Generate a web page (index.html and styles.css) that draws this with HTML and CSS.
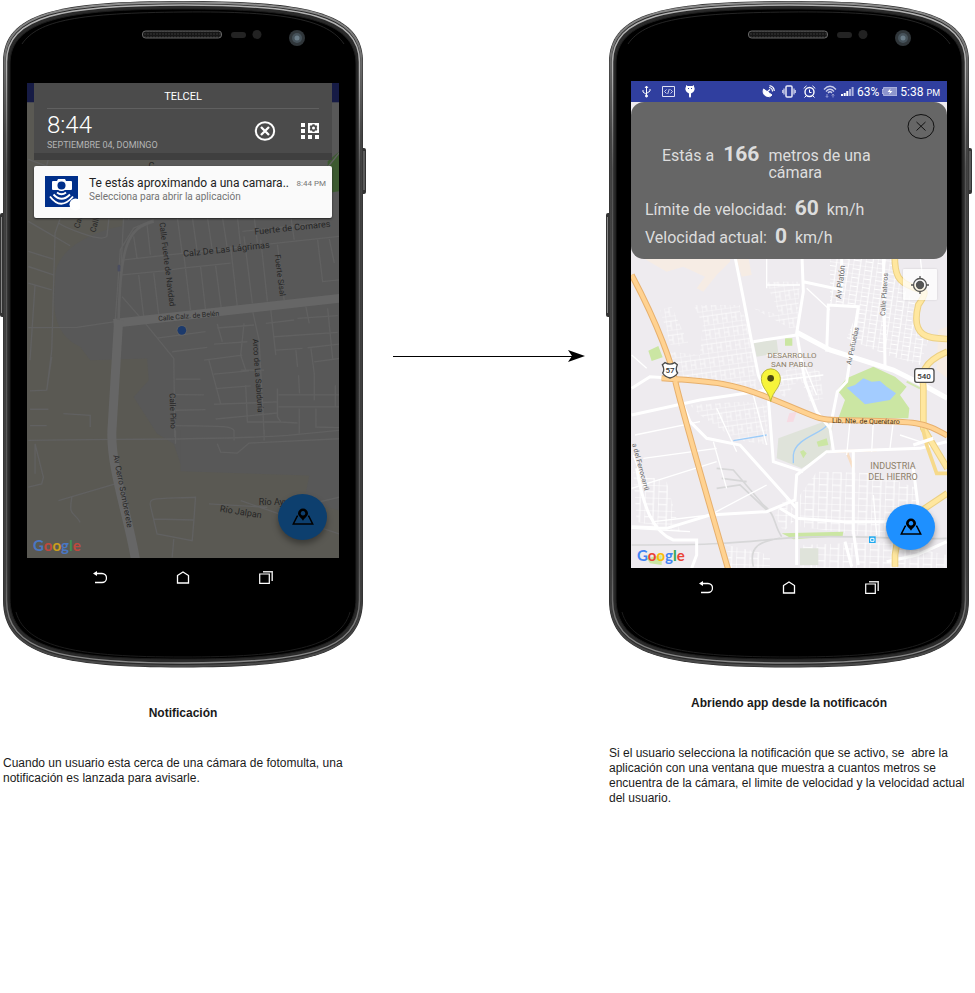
FILE: index.html
```html
<!DOCTYPE html>
<html lang="es">
<head>
<meta charset="utf-8">
<title>Notificación de cámaras</title>
<link rel="stylesheet" href="styles.css">
</head>
<body>
<svg class="defs" aria-hidden="true">
  <defs>
    <linearGradient id="rim" x1="0" y1="0" x2="0" y2="1">
      <stop offset="0" stop-color="#8e8e8e"/><stop offset=".06" stop-color="#777"/>
      <stop offset=".2" stop-color="#444"/><stop offset=".9" stop-color="#3c3c3c"/><stop offset="1" stop-color="#4a4a4a"/>
    </linearGradient>
    <linearGradient id="shine" x1="0" y1="0" x2="0" y2="1">
      <stop offset="0" stop-color="#b4b4b4"/><stop offset=".1" stop-color="#b0b0b0"/>
      <stop offset=".25" stop-color="#555"/><stop offset=".85" stop-color="#5a5a5a"/><stop offset="1" stop-color="#8a8a8a"/>
    </linearGradient>
    <pattern id="mesh" width="3" height="3" patternUnits="userSpaceOnUse"><rect width="3" height="3" fill="#161616"/><circle cx="1" cy="1" r=".8" fill="#3d3d3d"/></pattern>
  </defs>
  <symbol id="shell" viewBox="0 0 366 668" preserveAspectRatio="none">
    <rect x="0" y="213" width="6" height="104" rx="2" fill="#333"/><path d="M1.500 217V313" stroke="#888"/>
    <rect x="359" y="148" width="7" height="46" rx="2" fill="#333"/><path d="M364 151V190" stroke="#888"/>
    <path d="M3 62C3 12 60 1 183 1S363 12 363 62V600C363 655 306 667.500 183 667.500S3 655 3 600Z" fill="#2a2a2a"/>
    <path d="M4.500 62C4.500 13 61 2.500 183 2.500S361.500 13 361.500 62V600C361.500 654 306 666 183 666S4.500 654 4.500 600Z" fill="none" stroke="url(#rim)" stroke-width="2"/>
    <path d="M6.500 62C6.500 16 63 5 183 5S359.500 16 359.500 62V600C359.500 651 305 663 183 663S6.500 651 6.500 600Z" fill="none" stroke="url(#shine)" stroke-width="1.500"/>
    <path d="M10 64C10 20 66 9 183 9S356 20 356 64V598C356 648 304 659 183 659S10 648 10 598Z" fill="#000" stroke="#1c1c1c"/>
    <path d="M22 44C38 20 80 13 183 12S328 20 344 44" fill="none" stroke="#2e2e2e" stroke-width=".8"/>
    <path d="M16 612C26 648 80 657 183 657S340 648 350 612" fill="none" stroke="#1c1c1c"/>
    <rect x="142.500" y="31" width="79" height="7" rx="3" fill="url(#mesh)" stroke="#666"/>
    <rect x="231" y="32" width="15" height="6" rx="3" fill="#232323"/>
    <circle cx="257" cy="34.500" r="4.500" fill="#222"/>
    <circle cx="297" cy="38" r="8" fill="#30363a"/><circle cx="297" cy="38" r="5" fill="#46525a"/><circle cx="297" cy="38" r="2.500" fill="#6b7d89"/>
  </symbol>
  <symbol id="back" viewBox="0 0 14 13"><path d="M2 2.500H9a4.500 4.500 0 0 1 0 9H2" fill="none" stroke="#fff" stroke-width="1.300"/><path d="M0 2.500 4 0V5Z" fill="#fff"/></symbol>
  <symbol id="home" viewBox="0 0 14 13"><path d="M1.500 4.500 7 1 12.500 4.500V12H1.500Z" fill="none" stroke="#fff" stroke-width="1.300"/></symbol>
  <symbol id="recent" viewBox="0 0 14 13"><path d="M.7 3H10.300V12.300H.7Z" fill="none" stroke="#fff" stroke-width="1.200"/><path d="M4 .8H13.200V10" fill="none" stroke="#ddd" stroke-width="1.500"/></symbol>
  <symbol id="pinmap" viewBox="0 0 22 18"><path d="M6 8.200H5.200L1.300 16H20.700L16.800 8.200H16" fill="none" stroke="#000" stroke-width="1.500"/><path fill-rule="evenodd" d="M11 .5a5 5 0 0 1 5 4.800c0 3-3 4-5 7.500-2-3.500-5-4.500-5-7.500a5 5 0 0 1 5-4.800Zm0 2.500a2.300 2.300 0 1 0 .01 0Z"/></symbol>
</svg>

<main class="board">
  <figure class="step">
    <div class="phone phone-notice">
      <svg class="shell" aria-hidden="true"><use href="#shell"/></svg>
      <div class="screen screen-notice">
        <svg class="map" viewBox="27 83 311 475" preserveAspectRatio="xMidYMid slice" role="img" aria-label="Mapa de calles">
          <rect x="27" y="83" width="312" height="476" fill="#585858"/>
          <rect x="27" y="83" width="312" height="20" fill="#161b45"/>
          <g transform="translate(0 200) scale(.33333)">
            <path d="M80-290H500L480-140 370 60 365 80C300 90 160 140 165 240C160 300 150 400 240 440L270 480 440 475 445 540 400 590 470 700 520 730 540 790 1020 810V1080H80Z" fill="#5a5953"/>
            <path d="M540 812 925 825 910 900 1015 930V690H540Z" fill="#585858"/>
            <path d="M980-115 1016-145V-25L980-20Z" fill="#3c5a30"/>
            <g fill="none" stroke="#616161" stroke-width="4">
              <path d="M185-290 130-60M85-120 250-60 330 20 320 110C300 130 190 80 175 70M200 0 165 100 160 270 155 450 140 570 90 572M85 65 210 138M85 155 160 178M85 200 160 225M85 250 155 270M105 255 90 480M155 470 140 570M90 627H145M190 640 270 645 270 680M90 676H140"/>
              <path d="M85 383 230 382 345 365M85 720C350 715 640 720 860 705L1015 690M365 290 435 370 520 475 523 710M470 414 615 395M515 455 620 442M525 537H600M525 583 610 584M525 630 615 628M610 480 725 465M640 522 745 512M645 565 750 557M640 612 830 605M645 656 830 638M625 480 660 610M730 370 720 465 735 510M650 372 665 425M650 384 760 375M640 432 740 425M755 330 775 420 790 700M735 555 740 665H840M720 510 790 510"/>
              <path d="M810 330 825 465M795 370 880 360M890 355 1010 347M820 410 1010 397M825 450 905 445M920 443 1015 432M915 320 925 370M980 325 995 475M930 445 940 520M885 450 890 500M940 485 1015 475M893 525 896 580M940 520V600M830 565V650L840 665 890 668M833 584H1015M833 620H1015M895 625V700M945 625V680L1015 682M1003 555V620"/>
              <path d="M370 180 690 145 1015 110M365 225 490 213 545 205 690 190M400 110 410 175M440 75 450 165M415 225 430 350M460 220 475 345M600 200 615 330M645 198 662 325M690 140 710 320M730 110 755 310M780 120 800 305M830 135 850 300M550 165 570 330M530 50 545 160M575 50 590 155M620 50 635 150M665 50 680 145M710 50 720 140M760 50 770 130M725 95 960 70M870 50 880 120M950 120 965 245 1015 240M985 118 1000 190M370 50 355 350M460 60 400 85 360 150 345 360M375 0 385 60M540-60 550 50M610-80 620 50M670-85 680 50M740-85 750 50M820-90 835 50M1015-140 950-60"/>
              <path d="M525 730V690M700 720V690C690 675 650 678 525 676M650 730 660 755 710 758 745 728 1015 715M790 720V690M105 730 130 830 125 850 85 860M105 820V730M175 900 345 850M215 890C205 950 220 930 240 965M450 915C445 890 460 895 585 890L580 960 575 1020 470 1000Z M460 955 580 958M520 1015 515 1070M625 910 800 920M720 900 850 945 1015 1000M930 910 1015 890"/>
            </g>
            <path d="M340 370 1016 295" fill="none" stroke="#666" stroke-width="26"/><path d="M355 360 335 690C330 800 385 950 405 1075" fill="none" stroke="#666" stroke-width="27"/>
            <path d="M460 65C380 85 360 140 355 360" fill="none" stroke="#626262" stroke-width="8"/>
            <rect x="352" y="195" width="8" height="20" rx="4" fill="#4b4e61"/>
            <circle cx="544" cy="391" r="16" fill="#777" opacity=".25"/><circle cx="544" cy="391" r="13" fill="#1c3a6c"/>
          </g>
          <g class="street">
            <text class="small" transform="translate(79 229) rotate(-75)">Calle</text><text class="small" transform="translate(95 233) rotate(-75)">Calle</text>
            <text transform="translate(148 169)">C</text>
            <text class="small" transform="translate(159 223) rotate(83)">Calle Fuerte de Navidad</text>
            <text transform="translate(254 235) rotate(-6)">Fuerte de Comares</text>
            <text transform="translate(183 257) rotate(-6)">Calz De Las Lágrimas</text>
            <text class="small" transform="translate(274 255) rotate(83)">Fuerte Sisal</text>
            <text class="tiny" transform="translate(158 321) rotate(-5)">Calle Calz. de Belén</text>
            <text class="small" transform="translate(252 339) rotate(86)">Arco de La Sabiduría</text>
            <text class="small" transform="translate(169 393) rotate(88)">Calle Pino</text>
            <text class="small" transform="translate(113 455) rotate(79)">Av Cerro Sombrerete</text>
            <text transform="translate(219 511) rotate(9)">Río Jalpan</text>
            <text transform="translate(258 504)">Río Ayutla</text>
          </g>
        </svg>
        <div class="shade">
          <header class="panel">
            <p class="carrier">TELCEL</p>
            <div class="clock-row">
              <div><p class="clock">8:44</p><p class="date">SEPTIEMBRE 04, DOMINGO</p></div>
              <div class="tools">
                <button aria-label="Borrar notificaciones"><svg width="22" height="22" viewBox="0 0 22 22" fill="none" stroke="#fff" stroke-width="2"><ellipse cx="11" cy="11" rx="9.200" ry="8.700"/><path d="m7 7 8 8m0-8-8 8" stroke-width="2.300"/></svg></button>
                <button aria-label="Ajustes rápidos"><svg width="18" height="18" viewBox="0 0 18 18" fill="#fff"><path d="M0 1h4v4H0zM0 7h4v4H0zM0 13h4v4H0zM7 13h4v4H7zM14 13h4v4H14z"/><path fill-rule="evenodd" d="M7 1H18V11H7Z M11.500 2.300 11 3.500 9.500 3.300 8.700 5 9.500 6 8.700 7.300 9.500 8.800 11 8.500 11.500 9.700H13.500L14 8.500 15.500 8.800 16.300 7.300 15.500 6 16.300 5 15.500 3.300 14 3.500 13.500 2.300Z"/><circle cx="12.500" cy="6" r="1.500"/></svg></button>
              </div>
            </div>
          </header>
          <article class="notice">
            <svg class="notice-icon" width="35" height="35" viewBox="0 0 35 35" aria-hidden="true">
              <rect width="33" height="31" fill="#002f8a"/>
              <path d="M8 5H12L13 3H20L21 5H26Q27 5 27 6V13Q27 14 26 14H8Q7 14 7 13V6Q7 5 8 5Z" fill="#fff"/><circle cx="16.500" cy="9.500" r="4.800" fill="#002f8a" stroke="#fff" stroke-width="1.500"/>
              <g fill="none" stroke="#fff" stroke-width="1.900"><path d="M12 16.500Q16.500 20 21 16.500"/><path d="M8.500 18.500Q16.500 27 25 18.500"/><path d="M5 20.500Q16 35 28 20.500"/></g>
              <circle cx="30.500" cy="28.500" r="6" fill="#fff"/>
            </svg>
            <div class="notice-text"><div class="notice-head"><h2>Te estás aproximando a una camara..</h2><time>8:44 PM</time></div><p>Selecciona para abrir la aplicación</p></div>
          </article>
        </div>
        <p class="google google-dim"><span class="b">G</span><span class="r">o</span><span class="y">o</span><span class="b">g</span><span class="g">l</span><span class="r">e</span></p>
        <button class="fab fab-dim" aria-label="Ver mapa"><svg width="22" height="18"><use href="#pinmap"/></svg></button>
      </div>
      <nav class="keys"><button aria-label="Atrás"><svg><use href="#back"/></svg></button><button aria-label="Inicio"><svg><use href="#home"/></svg></button><button aria-label="Recientes"><svg><use href="#recent"/></svg></button></nav>
    </div>
    <figcaption class="caption caption-notice"><h1>Notificación</h1><p>Cuando un usuario esta cerca de una cámara de fotomulta, una notificación es lanzada para avisarle.</p></figcaption>
  </figure>

  <div class="arrow" aria-hidden="true"><span></span><svg width="17" height="12" viewBox="0 0 17 12"><path d="M0 0 17 6 0 12 4 6Z"/></svg></div>

  <figure class="step">
    <div class="phone phone-app">
      <svg class="shell" aria-hidden="true"><use href="#shell"/></svg>
      <div class="screen screen-app">
        <svg class="map" viewBox="631 81 316 487" preserveAspectRatio="xMidYMid slice" role="img" aria-label="Mapa de Querétaro">
          <defs>
            <pattern id="blocksA" width="28" height="42" patternUnits="userSpaceOnUse" patternTransform="rotate(-8)"><path d="M0 0H28M0 16H28M14 16V42M0 0V42M0 30H14" stroke="#fff" stroke-width="2" fill="none"/></pattern>
            <pattern id="blocksB" width="36" height="26" patternUnits="userSpaceOnUse" patternTransform="rotate(8)"><path d="M0 0H36M0 13H22M0 0V26M22 0V26" stroke="#fff" stroke-width="3" fill="none"/></pattern>
            <pattern id="blocksC" width="40" height="38" patternUnits="userSpaceOnUse" patternTransform="rotate(2)"><path d="M0 0H40M0 20H26M0 0V38M26 0V38" stroke="#fff" stroke-width="3" fill="none"/></pattern>
          </defs>
          <rect x="631" y="81" width="316" height="488" fill="#eeebef"/>
          <g transform="translate(600 255) scale(.33333)">
            <path d="M130-20H390V20L350 60 310 110 290 100 315 65 250 35 200 50 130 10Z M400-20H440L455 60 425 65Z M1015 225 1042 215V370L1010 345Z" fill="#f6ece4"/>
            <path d="M690-20H870L900 90 945 140 935 200 985 255 960 330 860 300 740 250 780 150 690 150Z" fill="url(#blocksB)"/>
            <path d="M310 190 430 170 450 250 465 300 470 410 340 385 230 365 210 290 300 300Z M180 165 215 155 265 265 215 280Z M280 150H420V190H300Z" fill="url(#blocksA)"/>
            <path d="M500 80H600L590 230 460 160 540 180 510 110Z M520 370 600 320 660 350 670 430 630 440 600 370 550 430Z M270 450 430 440 500 450 505 570 410 555 300 480Z" fill="url(#blocksA)"/>
            <path d="M650 650 830 655 950 700V860L780 840 600 815 600 720Z M600 870 860 860 1040 900V940H600Z M100 650 200 680 240 830 110 800Z M380 870 510 900V940H390Z M560 720 590 790 550 830 525 780Z" fill="url(#blocksC)"/>
            <path d="M460 258 530 255 535 295 470 305Z M535 550 700 490 690 590 605 640 530 610Z M600 880 655 880V930H600Z" fill="#dfe3da"/>
            <path d="M555 250H577V272H555Z M145 287 175 273 188 307 155 318Z M600 590 610 585 620 595 610 610Z M650 560 680 550 685 570 655 575Z M820 335 885 365 920 395 900 420 928 460 925 490 715 490 735 435 712 405 740 370Z M545 835 730 830 728 843 580 853Z M140 910 185 900V930L150 925Z" fill="#cbe6a3"/>
            <path d="M740 398 765 390 790 370 815 380 840 378 860 395 888 415 870 435 795 448Z" fill="#a3ccff"/>
            <path d="M590 470 580 500 560 502 568 475Z" fill="#f6dbe3"/>
            <path d="M680 512C665 535 585 550 580 600V625M400 557 500 540" fill="none" stroke="#9ccbf8" stroke-width="4" transform="translate(0 0)"/>
            <g fill="none" stroke="#d7d7d8" stroke-width="5"><path d="M95 870C350 870 400 865 550 850S900 855 1040 850M350 640 400 645 490 750C530 780 520 810 545 845M350 700 420 690 500 765M365 670 440 680M540 850C460 860 450 890 460 935"/></g>
            <path d="M700 590 830 585M740 590 760 640" fill="none" stroke="#f7ddc4" stroke-width="8"/>
            <g fill="none" stroke="#fff" stroke-width="4">
              <path d="M95 300 140 340M500 300H600L650 420M500 380 670 360M500 90H600M500 0V100M690 165 620 100M105 540 300 500M340 560 380 700M95 700 350 620M130 610 350 580M160 800 330 780 500 690M820 500 815 590M880 500 870 580M750 500 740 600M900 540 960 560M820 720 830 840M100 600 135 700M460 420 500 570M960 0 970 90M350 460 410 590M95 820 270 830"/>
            </g>
            <g fill="none" stroke="#fff" stroke-width="9">
              <path d="M400-20 430 130 455 260 475 360 505 430 520 620 610 650M605-20 610 110 590 235 615 380 650 470 690 520 700 585M610 80 725 105V-20M460 260 590 240M680 290 685 150 775 155 740 380 712 410 690 520M850-20 855 330 850 335M95 480 300 435 500 405M95 400 150 365 220 370M230 400 270 500 320 550 420 570 590 760M95 815 200 820 330 780 500 770 585 735 590 660 680 590 960 580 1040 560M590 740V930M760 590V830L775 930M540 760 590 790 730 800 880 800M940 640 955 760M110 640C130 760 160 830 220 855L290 855V900L275 940M735 860 755 935M860 920 950 900 1040 860"/>
            </g>
            <path d="M590 232 690 285 880 345 970 390 1042 430" fill="none" stroke="#fff" stroke-width="15"/>
            <path d="M920 380 960 400" stroke="#d3e8b1" stroke-width="6"/>
            <g fill="none" stroke="#ecd083" stroke-width="20"><path d="M885-20C880 70 900 80 935 95S990 100 955 150C930 250 990 250 1042 252M1042 290C950 330 970 370 970 400V520L1042 640M1042 715 900 810 885 900V935"/></g>
            <g fill="none" stroke="#ffe79f" stroke-width="14"><path d="M885-20C880 70 900 80 935 95S990 100 955 150C930 250 990 250 1042 252M1042 290C950 330 970 370 970 400V520L1042 640M1042 715 900 810 885 900V935"/></g>
            <path d="M968 520 980 570 1010 655H1042" fill="none" stroke="#f6d98a" stroke-width="11"/>
            <path d="M95 60C180 220 215 330 225 375S250 480 385 945M185 370C350 380 400 385 510 430C650 485 650 495 710 495C950 500 960 495 1042 542" fill="none" stroke="#e7b06d" stroke-width="18"/>
            <path d="M95 60C180 220 215 330 225 375S250 480 385 945M185 370C350 380 400 385 510 430C650 485 650 495 710 495C950 500 960 495 1042 542" fill="none" stroke="#ffd291" stroke-width="12"/>
            <path d="M940 570 1000 550" stroke="#fff" stroke-width="10"/>
            <path d="M187 329 195 323Q210 332 224 323L232 329Q225 345 233 354Q225 366 210 369Q195 366 188 354Q195 345 187 329Z M951 341H995Q1002 341 1002 349V374Q1002 382 995 382H951Q944 382 944 374V349Q944 341 951 341Z" fill="#fff" stroke="#4c4c4c" stroke-width="4"/>
            <path d="M512 439C505 405 484 400 484 370A28 28 0 0 1 541 370C541 400 520 405 512 439Z" fill="#f7f43a" stroke="#b9b63a" stroke-width="3"/><circle cx="512" cy="370" r="10" fill="#4d4a12"/>
            <rect x="807" y="844" width="20" height="20" fill="#20aaf0"/><path d="M812 850H822V859H812Z" fill="none" stroke="#fff" stroke-width="3"/>
          </g>
          <g class="street street-light">
            <text transform="translate(841 299) rotate(-83)">Av Platón</text>
            <text class="tiny" transform="translate(885 316) rotate(-86)">Calle Plateros</text>
            <text class="tiny" transform="translate(851 365) rotate(-78)">Av Peñuelas</text>
            <text class="tiny" transform="translate(632 444) rotate(75)">a del Ferrocarril</text>
            <text class="highway" x="832" y="423" transform="rotate(1 832 423)">Lib. Nte. de Querétaro</text>
          </g>
          <g class="district"><text x="792" y="358">DESARROLLO</text><text x="792" y="367">SAN PABLO</text></g>
          <g class="district district-big"><text x="893" y="469">INDUSTRIA</text><text x="893" y="480">DEL HIERRO</text></g>
          <g class="shield"><text x="670" y="373">57</text><text x="924" y="379">540</text></g>
        </svg>
        <div class="app">
          <div class="status">
            <svg width="9" height="13" viewBox="0 0 9 13" fill="none" stroke="#fff"><path d="M4.500 1V11M1 5V7L4.500 9.500M8 4V6L4.500 8.500M3 3 4.500 1 6 3"/><circle cx="4.500" cy="11" r="1" fill="#fff"/></svg>
            <svg class="s-code" width="13" height="13" viewBox="0 0 13 13" fill="none" stroke="#dfe1f3"><path d="M.5 1.500H12.500V11.500H.5Z"/><path d="M4.500 4.500 2.500 6.500 4.500 8.500M8.500 4.500 10.500 6.500 8.500 8.500M7.300 4 5.700 9" stroke-width=".9"/></svg>
            <svg class="s-bot" width="10" height="13" viewBox="0 0 10 13" fill="#fff"><path d="M1 0 2.500 1H7.500L9 0V1.500Q10 3 9.500 5 8.500 8 6 8.500V11.500L5 13 4 11.500V8.500Q1.500 8 .5 5 0 3 1 1.500Z"/><path d="M3 3.500h1M6 3.500h1" stroke="#303f9f"/></svg>
            <svg class="s-first" width="13" height="13" viewBox="0 0 13 13" fill="none" stroke="#fff"><path d="M1.500 4Q0 9 4 11T10 10Z" fill="#fff"/><path d="M5 7 8 4.500M7 2.500Q10.500 3 10.500 6.500M7.500.700Q12 1.500 12.300 6" stroke-width="1.200"/></svg>
            <svg width="14" height="13" viewBox="0 0 14 13" fill="none" stroke="#e8eaf8"><rect x="4" y="1" width="6" height="11" rx="1" stroke-width="1.500"/><path d="M2 3.500V9.500M12 3.500V9.500M.5 5V8M13.500 5V8" stroke="#b5bae0" stroke-width="1.500"/></svg>
            <svg width="13" height="13" viewBox="0 0 13 13" fill="none" stroke="#fff"><circle cx="6.500" cy="7" r="4.500" stroke-width="1.400"/><path d="M6.500 4.500V7.500H8.500M.7 3.500 3.500.8M12.300 3.500 9.500.8M3 11 1.500 12.500M10 11 11.500 12.500"/></svg>
            <svg width="14" height="13" viewBox="0 0 14 13" fill="none" stroke="#c8ccea"><path d="M1 4.500Q7-2 13 4.500M3 6.500Q7 2 11 6.500M5 8Q7 5.500 9 8" stroke-width="1.300"/><path d="M4 9V12M2.800 11 4 12.500 5.200 11M10 12.500V9.500M8.800 10.500 10 9 11.200 10.500" stroke="#8f97d0"/></svg>
            <svg class="s-signal" width="13" height="13" viewBox="0 0 13 13" fill="#fff"><path d="M0 9h2v2H0zM2.700 8h2v3h-2zM5.300 6h2v5h-2z"/><path d="M8 4h2v7H8zM10.600 2h2v9h-2z" fill="#aab0dc"/></svg>
            <span>63%</span>
            <svg width="15" height="9" viewBox="0 0 15 9"><path d="M0 2.500H1.500V.5H15V8.500H1.500V6.500H0Z" fill="#8d95cd" stroke="#c9cdec" stroke-width=".7"/><path d="M8.500 1.500 5.500 5H8L7 7.500 10.500 4H8Z" fill="#fff"/></svg>
            <time>5:38 <small>PM</small></time>
          </div>
          <section class="info">
            <button class="close" aria-label="Cerrar"><svg width="28" height="27" viewBox="0 0 28 27" fill="none" stroke="#111"><ellipse cx="14" cy="13.500" rx="13" ry="12"/><path d="m9.500 9 9 8.500m0-8.500-9 8.500"/></svg></button>
            <p class="distance">Estás a <strong>166</strong><span class="target">metros de una cámara</span></p>
            <p class="speed">Límite de velocidad: <strong>60</strong> km/h</p>
            <p class="speed">Velocidad actual: <strong>0</strong> km/h</p>
          </section>
        </div>
        <button class="locate" aria-label="Mi ubicación"><svg width="18" height="18" viewBox="0 0 18 18" fill="none" stroke="#555" stroke-width="1.300"><circle cx="9" cy="9" r="6.500"/><path d="M9 0V3M9 15V18M0 9H3M15 9H18"/><circle cx="9" cy="9" r="3.500" fill="#555"/></svg></button>
        <p class="google"><span class="b">G</span><span class="r">o</span><span class="y">o</span><span class="b">g</span><span class="g">l</span><span class="r">e</span></p>
        <button class="fab" aria-label="Ver mapa"><svg width="22" height="18"><use href="#pinmap"/></svg></button>
      </div>
      <nav class="keys"><button aria-label="Atrás"><svg><use href="#back"/></svg></button><button aria-label="Inicio"><svg><use href="#home"/></svg></button><button aria-label="Recientes"><svg><use href="#recent"/></svg></button></nav>
    </div>
    <figcaption class="caption caption-app"><h1>Abriendo app desde la notificacón</h1><p>Si el usuario selecciona la notificación que se activo, se&nbsp; abre la aplicación con una ventana que muestra a cuantos metros se encuentra de la cámara, el limite de velocidad y la velocidad actual del usuario.</p></figcaption>
  </figure>
</main>
</body>
</html>
```

FILE: styles.css
```css
* { box-sizing: border-box; }
body { margin: 0; background: #fff; color: #1a1a1a; font-family: "Liberation Sans", Arial, sans-serif; font-size: 12px; }
h1, h2, p, figure { margin: 0; }
button { display: block; padding: 0; border: 0; background: none; cursor: pointer; }
svg { display: block; }
.defs { position: absolute; width: 0; height: 0; }

.board { display: grid; grid-template-columns: minmax(0, 366px) minmax(0, 1fr) minmax(0, 366px); padding-right: 3px; }

/* Phone body */
.phone { position: relative; aspect-ratio: 366 / 668; font-family: Roboto, sans-serif; }
.phone-notice { padding: 83px 27px 0; }
.phone-app { padding: 81px 25px 0; }
.shell { position: absolute; inset: 0; width: 100%; height: 100%; z-index: -1; }
.screen { position: relative; display: grid; overflow: hidden; }
.screen-notice { aspect-ratio: 312 / 475; }
.screen-app { aspect-ratio: 316 / 487; }
.map { grid-area: 1 / 1; width: 100%; height: 100%; }
.shade, .app { grid-area: 1 / 1; z-index: 1; }
.keys { display: flex; justify-content: center; gap: 69px; padding-top: 13px; }
.keys svg { width: 14px; height: 13px; }

/* Map lettering */
.street { font-size: 9px; fill: #262626; }
.street .small { font-size: 8px; }
.street .tiny { font-size: 7px; }
.street-light { font-size: 8px; fill: #666; }
.street .highway { font-size: 7px; fill: #4e3a1c; }
.district { font-size: 8px; text-anchor: middle; fill: #8d8069; }
.district-big { font-size: 9px; }
.shield { font-size: 8px; font-weight: 500; text-anchor: middle; fill: #333; }

/* Notification shade */
.shade { padding: 0 7px; }
.panel { height: 77px; padding: 0 13px; background: #4b4b4b; border-bottom: 7px solid #3f3f3f; color: #fff; }
.carrier { padding: 6px 0 4px; border-bottom: 1px solid #606060; font-size: 11px; line-height: 15px; text-align: center; }
.clock-row { display: flex; justify-content: space-between; }
.clock { padding-top: 3px; font-size: 24px; font-weight: 300; line-height: 27px; }
.date { color: #b4b4b4; font-size: 9px; line-height: 13px; }
.tools { display: flex; align-items: center; gap: 25px; }
.notice { display: flex; gap: 9px; height: 52px; margin-top: 6px; padding: 10px 6px 0 11px; background: #fafafa; border-radius: 2px; box-shadow: 0 1px 2px #222; color: #222; }
.notice-icon { flex: none; }
.notice-text { flex: 1; min-width: 0; white-space: nowrap; }
.notice-head { display: flex; justify-content: space-between; align-items: center; }
.notice h2 { font-size: 12px; font-weight: 400; line-height: 14px; }
.notice time { color: #777; font-size: 8px; }
.notice p { color: #737373; font-size: 10px; line-height: 14px; }

/* Overlays on the map */
.google { position: absolute; left: 6px; bottom: 4px; font-family: Lato, sans-serif; font-size: 15px; font-weight: 700; line-height: 18px; z-index: 1; }
.google .b { color: #4285f4; }
.google .r { color: #ea4335; }
.google .y { color: #fbbc05; }
.google .g { color: #34a853; }
.google-dim { opacity: .7; }
.fab { position: absolute; right: 12px; bottom: 18px; display: grid; place-items: center; width: 49px; height: 46px; border-radius: 50%; background: #1e90ff; box-shadow: 0 4px 6px rgba(0, 0, 0, .35); z-index: 1; }
.fab-dim { background: #0d3f6e; }
.locate { position: absolute; top: 188px; right: 10px; display: grid; place-items: center; width: 34px; height: 31px; background: rgba(255, 255, 255, .75); border-radius: 1px; box-shadow: 0 0 2px rgba(0, 0, 0, .15); z-index: 1; }

/* App status bar and information panel */
.status { display: flex; align-items: center; gap: 7px; height: 21px; padding: 0 7px 0 11px; background: #303f9f; color: #fff; font-size: 12px; white-space: nowrap; }
.status svg { flex: none; }
.status .s-code { margin-left: 4px; }
.status .s-bot { margin-left: 3px; }
.status .s-first { margin-left: auto; }
.status .s-signal { margin-left: -3px; }
.status span { margin: 0 -4px; }
.status time { margin-left: -4px; }
.status small { font-size: 9px; }
.info { position: relative; height: 157px; padding: 39px 14px 0; border-radius: 13px; background: #666; color: #ddd; font-size: 16px; }
.info strong { margin: 0 4px; font-size: 21px; line-height: 26px; }
.close { position: absolute; top: 11px; right: 12px; }
.distance { display: flex; align-items: baseline; height: 38px; margin-left: 17px; }
.distance strong { margin: 0 9px; }
.distance .target { width: 120px; line-height: 17px; }
.speed { line-height: 26px; }
.distance + .speed { margin-top: 16px; }

/* Arrow between the two steps */
.arrow { display: flex; align-items: center; height: 12px; margin: 350px 21px 0 27px; }
.arrow span { flex: 1; height: 1px; margin-right: -4px; background: #000; }

/* Captions */
.caption { line-height: 15px; }
.caption p { padding-left: 3px; }
.caption h1 { margin-bottom: 35px; font-size: 12px; line-height: 16px; text-align: center; }
.caption-notice { padding-top: 37px; }
.caption-app { padding-top: 27px; }
```
